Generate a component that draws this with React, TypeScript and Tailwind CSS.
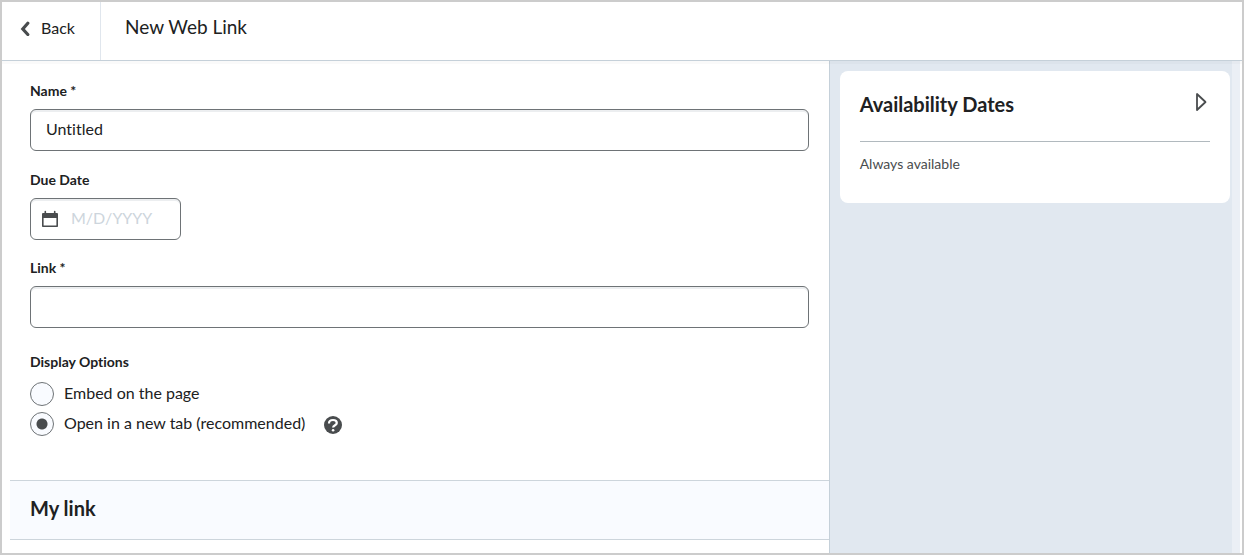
import { useState } from "react"

const inputClass =
    "h-[42px] rounded-md border border-[#6e7376] bg-white text-base text-[#202122] shadow-[inset_0_2px_0_0_#eceef0] outline-none focus:border-[#006fbf]"

const labelClass = "block text-sm leading-5 font-bold text-[#202122]"

const displayOptions = [
    { value: "embed", label: "Embed on the page" },
    { value: "tab", label: "Open in a new tab (recommended)" },
]

function Header() {
    return (
        <header className="relative flex h-[59px] shrink-0 border-b border-[#c5d0d9] bg-white shadow-[0_3px_0_0_rgba(0,0,0,0.02)]">
            <a
                href="#back"
                className="flex w-[99px] items-center gap-[11px] border-r border-[#e0e6ed] pb-[6px] pl-[18px] text-base text-[#202122]"
            >
                <svg className="h-4 w-[10px] shrink-0" viewBox="0 0 10 16" fill="none" aria-hidden="true">
                    <path d="M7.8 3.3 2.8 9l5 5.5" stroke="#494c4e" strokeWidth="3.2" strokeLinecap="round" />
                </svg>
                Back
            </a>
            <h1 className="flex items-center pb-2 pl-6 text-[19px] text-[#202122]">New Web Link</h1>
        </header>
    )
}

function CalendarIcon() {
    return (
        <svg className="h-[18px] w-[18px] shrink-0" viewBox="0 0 18 18" aria-hidden="true">
            <path
                fill="#494c4e"
                fillRule="evenodd"
                d="M3.5 1.6a.8.8 0 0 1 1.6 0V3h7.8V1.6a.8.8 0 0 1 1.6 0V3H16a1 1 0 0 1 1 1v12.2a.8.8 0 0 1-.8.8H1.8a.8.8 0 0 1-.8-.8V4a1 1 0 0 1 1-1h1.500zM2.600 8v7.400h12.800V8z"
            />
        </svg>
    )
}

function HelpIcon() {
    return (
        <svg className="h-[18px] w-[18px]" viewBox="0 0 18 18" fill="none" aria-hidden="true">
            <circle cx="9" cy="9" r="9" fill="#494c4e" />
            <path
                d="M5 7.4C5 5.1 6.8 4 9 4s3.8 1.2 3.8 3c0 2.3-3.7 2.1-3.7 4.6"
                stroke="#fff"
                strokeWidth="2.2"
            />
            <circle cx="9.1" cy="14.3" r="1.3" fill="#fff" />
        </svg>
    )
}

function AvailabilityCard() {
    return (
        <section className="h-[132px] rounded-lg bg-white px-5">
            <div className="flex h-[71px] items-start justify-between border-b border-[#b1b9be] pt-5">
                <h2 className="text-xl leading-[26px] font-bold text-[#202122]">Availability Dates</h2>
                <button type="button" aria-label="Expand Availability Dates" className="pr-[3px]">
                    <svg className="h-[22px] w-[12px]" viewBox="0 0 12 22" fill="none">
                        <path d="M2 3v16l8.500-8z" stroke="#494c4e" strokeWidth="1.8" strokeLinejoin="round" />
                    </svg>
                </button>
            </div>
            <p className="pt-3 text-sm leading-5 text-[#494c4e]">Always available</p>
        </section>
    )
}

export default function App() {
    const [name, setName] = useState("Untitled")
    const [display, setDisplay] = useState("tab")

    return (
        <div className="flex min-h-screen flex-col border-2 border-[#cccccc] bg-white font-['Lato',sans-serif] text-[#202122] [font-variant-ligatures:none]">
            <Header />
            <div className="flex flex-1">
                <main className="w-2/3 pl-2">
                    <form className="px-5 pt-5">
                        <label htmlFor="name" className={labelClass}>Name *</label>
                        <input
                            id="name"
                            value={name}
                            onChange={(e) => setName(e.target.value)}
                            className={`${inputClass} mt-2 block w-full px-[15px] pb-[3px]`}
                        />

                        <label htmlFor="due" className={`${labelClass} mt-[19px]`}>Due Date</label>
                        <div className={`${inputClass} mt-2 flex w-[151px] items-center gap-3 pl-[10px]`}>
                            <CalendarIcon />
                            <input
                                id="due"
                                placeholder="M/D/YYYY"
                                className="h-full w-full min-w-0 bg-transparent pb-[3px] outline-none placeholder:text-[#cdd5dc]"
                            />
                        </div>

                        <label htmlFor="link" className={`${labelClass} mt-[18px]`}>Link *</label>
                        <input id="link" className={`${inputClass} mt-2 block w-full px-[15px] pb-[3px]`} />

                        <fieldset className="mt-6">
                            <legend className={labelClass}>Display Options</legend>
                            <div className="mt-[10px] flex flex-col gap-[6px]">
                                {displayOptions.map((option) => (
                                    <div key={option.value} className="flex h-6 items-center">
                                        <input
                                            type="radio"
                                            id={option.value}
                                            name="display"
                                            checked={display === option.value}
                                            onChange={() => setDisplay(option.value)}
                                            className="h-6 w-6 shrink-0 appearance-none rounded-full border border-[#6e7376] bg-[#f9fbff] checked:bg-[radial-gradient(circle,#494c4e_5px,transparent_6px)]"
                                        />
                                        <label htmlFor={option.value} className="pb-[3px] pl-[10px] text-base leading-6">
                                            {option.label}
                                        </label>
                                        {option.value === "tab" && (
                                            <button type="button" aria-label="Help" className="ml-[19px] pt-[2px]">
                                                <HelpIcon />
                                            </button>
                                        )}
                                    </div>
                                ))}
                            </div>
                        </fieldset>
                    </form>

                    <section className="mt-11 flex h-[60px] items-center border-y border-[#cdd5dc] bg-[#f9fbff] pb-1 pl-5">
                        <h2 className="text-xl font-bold">My link</h2>
                    </section>
                </main>

                <aside className="flex w-1/3 border-l border-[#c5d0d9] pr-[2px]">
                    <div className="flex-1 bg-[#e1e8f0] pt-[10px] pr-[2px] pl-[10px]">
                        <AvailabilityCard />
                    </div>
                    <div className="w-2 bg-[#ebeff5]" />
                </aside>
            </div>
        </div>
    )
}
